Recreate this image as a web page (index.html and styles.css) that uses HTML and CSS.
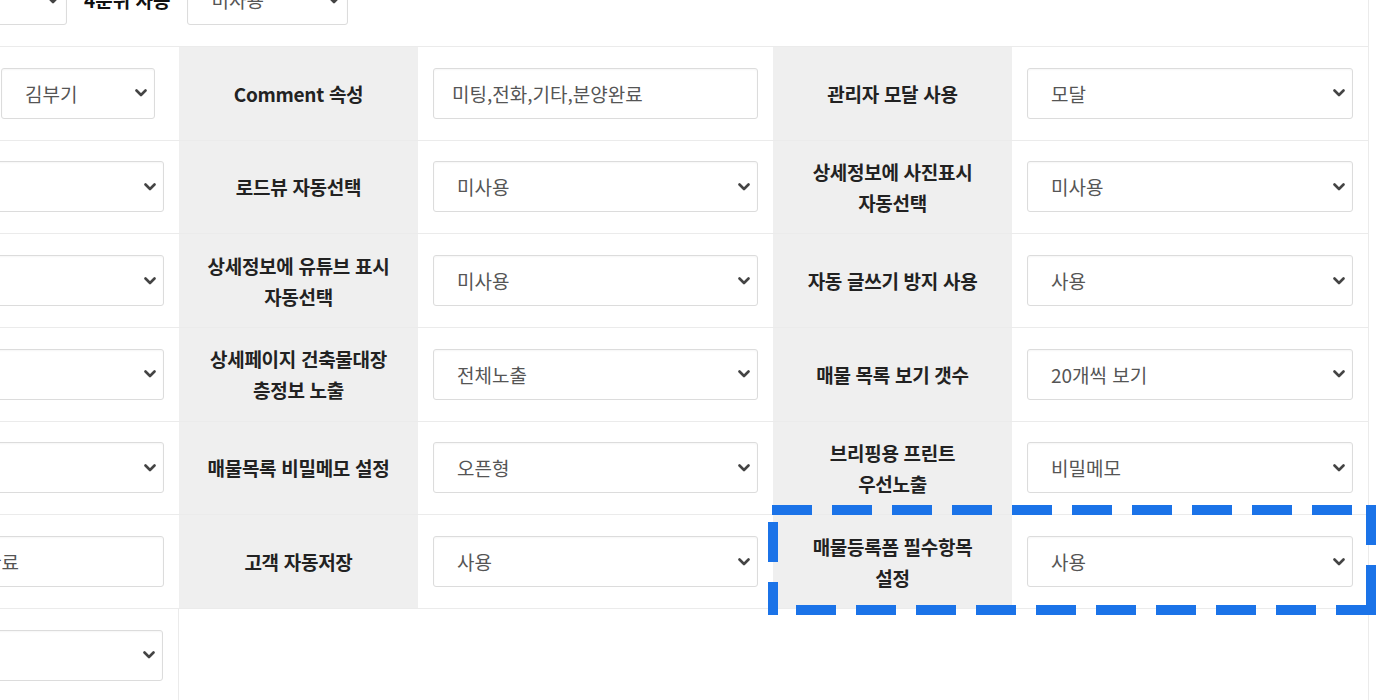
FILE: index.html
```html
<!DOCTYPE html>
<html lang="ko">
<head>
  <meta charset="UTF-8">
  <title>환경설정</title>
  <link rel="stylesheet" href="styles.css">
</head>
<body>

  <div class="panel">

    <div class="filter">
      <label class="sel w-short">
        <select><option>사용</option></select>
        <svg class="chev" width="12" height="8" viewBox="0 0 12 8"><path d="M1.5 1.5 L6 6 L10.5 1.5"/></svg>
      </label>
      <span class="filter-label">4순위 사용</span>
      <label class="sel w-short">
        <select><option>미사용</option></select>
        <svg class="chev" width="12" height="8" viewBox="0 0 12 8"><path d="M1.5 1.5 L6 6 L10.5 1.5"/></svg>
      </label>
    </div>

    <div class="grid">

      <!-- 1 -->
      <div class="val pair">
        <label class="sel w-short">
          <select><option>영업팀</option></select>
          <svg class="chev" width="12" height="8" viewBox="0 0 12 8"><path d="M1.5 1.5 L6 6 L10.5 1.5"/></svg>
        </label>
        <label class="sel w-short">
          <select><option>김부기</option></select>
          <svg class="chev" width="12" height="8" viewBox="0 0 12 8"><path d="M1.5 1.5 L6 6 L10.5 1.5"/></svg>
        </label>
      </div>
      <div class="lbl">Comment 속성</div>
      <div class="val"><input class="txt" type="text" value="미팅,전화,기타,분양완료"></div>
      <div class="lbl">관리자 모달 사용</div>
      <div class="val">
        <label class="sel">
          <select><option>모달</option></select>
          <svg class="chev" width="12" height="8" viewBox="0 0 12 8"><path d="M1.5 1.5 L6 6 L10.5 1.5"/></svg>
        </label>
      </div>

      <!-- 2 -->
      <div class="val">
        <label class="sel">
          <select><option>사용</option></select>
          <svg class="chev" width="12" height="8" viewBox="0 0 12 8"><path d="M1.5 1.5 L6 6 L10.5 1.5"/></svg>
        </label>
      </div>
      <div class="lbl">로드뷰 자동선택</div>
      <div class="val">
        <label class="sel">
          <select><option>미사용</option></select>
          <svg class="chev" width="12" height="8" viewBox="0 0 12 8"><path d="M1.5 1.5 L6 6 L10.5 1.5"/></svg>
        </label>
      </div>
      <div class="lbl">상세정보에 사진표시<br>자동선택</div>
      <div class="val">
        <label class="sel">
          <select><option>미사용</option></select>
          <svg class="chev" width="12" height="8" viewBox="0 0 12 8"><path d="M1.5 1.5 L6 6 L10.5 1.5"/></svg>
        </label>
      </div>

      <!-- 3 -->
      <div class="val">
        <label class="sel">
          <select><option>사용</option></select>
          <svg class="chev" width="12" height="8" viewBox="0 0 12 8"><path d="M1.5 1.5 L6 6 L10.5 1.5"/></svg>
        </label>
      </div>
      <div class="lbl">상세정보에 유튜브 표시<br>자동선택</div>
      <div class="val">
        <label class="sel">
          <select><option>미사용</option></select>
          <svg class="chev" width="12" height="8" viewBox="0 0 12 8"><path d="M1.5 1.5 L6 6 L10.5 1.5"/></svg>
        </label>
      </div>
      <div class="lbl">자동 글쓰기 방지 사용</div>
      <div class="val">
        <label class="sel">
          <select><option>사용</option></select>
          <svg class="chev" width="12" height="8" viewBox="0 0 12 8"><path d="M1.5 1.5 L6 6 L10.5 1.5"/></svg>
        </label>
      </div>

      <!-- 4 -->
      <div class="val">
        <label class="sel">
          <select><option>사용</option></select>
          <svg class="chev" width="12" height="8" viewBox="0 0 12 8"><path d="M1.5 1.5 L6 6 L10.5 1.5"/></svg>
        </label>
      </div>
      <div class="lbl">상세페이지 건축물대장<br>층정보 노출</div>
      <div class="val">
        <label class="sel">
          <select><option>전체노출</option></select>
          <svg class="chev" width="12" height="8" viewBox="0 0 12 8"><path d="M1.5 1.5 L6 6 L10.5 1.5"/></svg>
        </label>
      </div>
      <div class="lbl">매물 목록 보기 갯수</div>
      <div class="val">
        <label class="sel">
          <select><option>20개씩 보기</option></select>
          <svg class="chev" width="12" height="8" viewBox="0 0 12 8"><path d="M1.5 1.5 L6 6 L10.5 1.5"/></svg>
        </label>
      </div>

      <!-- 5 -->
      <div class="val">
        <label class="sel">
          <select><option>사용</option></select>
          <svg class="chev" width="12" height="8" viewBox="0 0 12 8"><path d="M1.5 1.5 L6 6 L10.5 1.5"/></svg>
        </label>
      </div>
      <div class="lbl">매물목록 비밀메모 설정</div>
      <div class="val">
        <label class="sel">
          <select><option>오픈형</option></select>
          <svg class="chev" width="12" height="8" viewBox="0 0 12 8"><path d="M1.5 1.5 L6 6 L10.5 1.5"/></svg>
        </label>
      </div>
      <div class="lbl">브리핑용 프린트<br>우선노출</div>
      <div class="val">
        <label class="sel">
          <select><option>비밀메모</option></select>
          <svg class="chev" width="12" height="8" viewBox="0 0 12 8"><path d="M1.5 1.5 L6 6 L10.5 1.5"/></svg>
        </label>
      </div>

      <!-- 6 -->
      <div class="val"><input class="txt" type="text" value="전화, 방문,상담,완료"></div>
      <div class="lbl">고객 자동저장</div>
      <div class="val">
        <label class="sel">
          <select><option>사용</option></select>
          <svg class="chev" width="12" height="8" viewBox="0 0 12 8"><path d="M1.5 1.5 L6 6 L10.5 1.5"/></svg>
        </label>
      </div>
      <div class="lbl">매물등록폼 필수항목<br>설정</div>
      <div class="val">
        <label class="sel">
          <select><option>사용</option></select>
          <svg class="chev" width="12" height="8" viewBox="0 0 12 8"><path d="M1.5 1.5 L6 6 L10.5 1.5"/></svg>
        </label>
      </div>

      <!-- 7 -->
      <div class="val last">
        <label class="sel">
          <select><option>사용</option></select>
          <svg class="chev" width="12" height="8" viewBox="0 0 12 8"><path d="M1.5 1.5 L6 6 L10.5 1.5"/></svg>
        </label>
      </div>

      <!-- 강조 표시 -->
      <svg class="highlight" width="608" height="110" viewBox="0 0 608 110">
        <line class="edge-top" x1="4" y1="5" x2="608" y2="5"/>
        <line class="edge-right" x1="603" y1="0" x2="603" y2="110"/>
        <line class="edge-bottom" x1="608" y1="105" x2="0" y2="105"/>
        <line class="edge-left" x1="5" y1="110" x2="5" y2="0"/>
      </svg>
    </div>

  </div>

</body>
</html>
```

FILE: styles.css
```css
html, body {
  overflow: hidden;
}

body {
  margin: 0;
  background-color: #fff;
  font-family: "Noto Sans CJK KR", "Noto Sans", sans-serif;
  font-size: 19px;
  color: #222;
}

.panel {
  width: 1544px;
  margin-left: -176px;
  min-height: 800px;
  border-right: 1px solid #ebebeb;
}

/* 상단 필터 */
.filter {
  display: flex;
  align-items: center;
  gap: 17px;
  margin-top: -26px;
  margin-bottom: 21px;
  padding-left: 82px;
}

.filter-label {
  font-weight: 700;
  color: #111;
  white-space: nowrap;
}

/* 설정 표 */
.grid {
  position: relative;
  display: grid;
  grid-template-columns: 355px 239px 355px 239px 356px;
  grid-auto-rows: 93.67px;
  border-top: 1px solid #ebebeb;
}

.lbl, .val {
  box-sizing: border-box;
  border-bottom: 1px solid #ebebeb;
}

.lbl {
  display: flex;
  align-items: center;
  justify-content: center;
  text-align: center;
  background-color: #efefef;
  font-weight: 700;
  line-height: 31px;
  letter-spacing: -0.3px;
  color: #222;
}

.val {
  display: flex;
  align-items: center;
  padding: 0 15px;
}

.val.pair {
  gap: 8px;
}

.val.last {
  border-right: 1px solid #ebebeb;
}

/* 입력 요소 */
.sel {
  position: relative;
  display: block;
  width: 100%;
  height: 51px;
}

.sel.w-short {
  width: 161px;
  flex: none;
}

.val.pair .sel.w-short {
  width: 154px;
}

.sel select,
.txt {
  box-sizing: border-box;
  width: 100%;
  height: 51px;
  border: 1px solid #dcdcdc;
  border-radius: 3px;
  box-shadow: inset 0 1px 2px rgba(0, 0, 0, 0.04);
  background-color: #fff;
  font: inherit;
  color: #555;
  outline: none;
}

.sel select {
  appearance: none;
  -webkit-appearance: none;
  padding: 0 36px 0 23px;
}

.txt {
  padding: 0 18px;
}

.chev {
  position: absolute;
  right: 8px;
  top: 50%;
  margin-top: -4px;
  pointer-events: none;
}

.chev path {
  fill: none;
  stroke: #444;
  stroke-width: 2.6;
  stroke-linecap: round;
  stroke-linejoin: round;
}

/* 강조 박스 */
.highlight {
  position: absolute;
  left: 944px;
  top: 458px;
}

.highlight line {
  stroke: #1b73e8;
  stroke-width: 10;
  stroke-dasharray: 40 20;
}

.highlight .edge-left {
  stroke-dasharray: 33 20 40 100;
}
```
